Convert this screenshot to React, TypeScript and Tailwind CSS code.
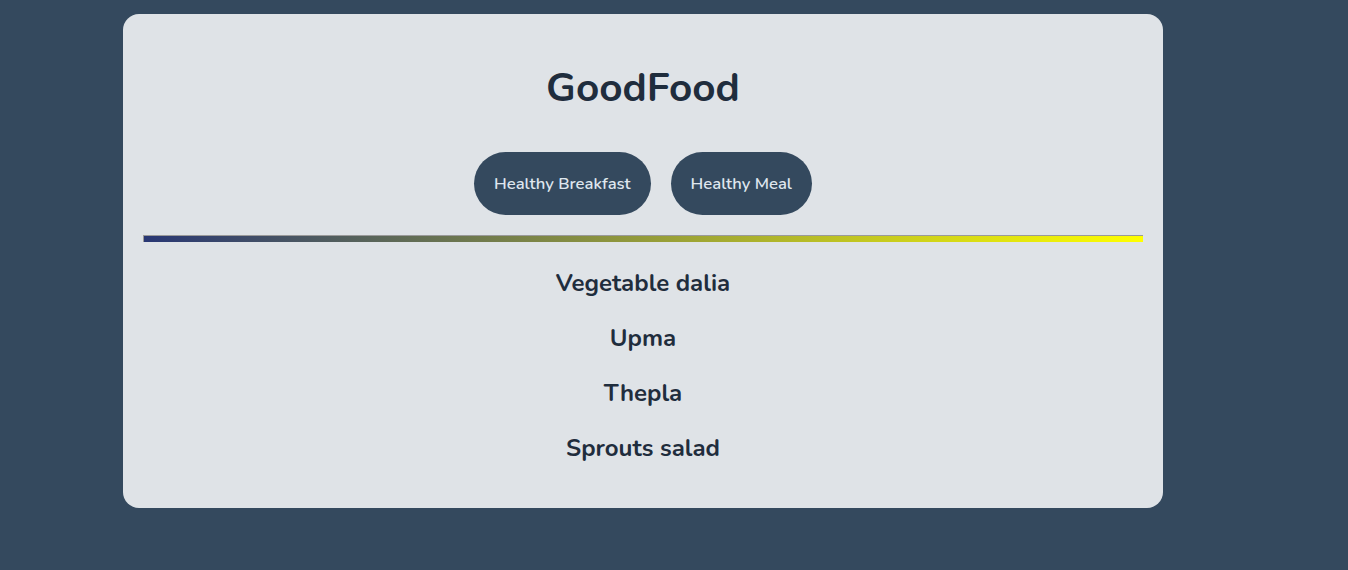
import React from "react";

const font = { fontFamily: '"Nunito", "Lato", "Open Sans", sans-serif' };

export default function App() {
  const items = ["Vegetable dalia", "Upma", "Thepla", "Sprouts salad"];
  return (
    <div className="min-h-[570px] w-full bg-[#34495e] pt-[14px] pb-[62px]" style={font}>
      <div className="ml-[123px] w-[1040px] h-[494px] rounded-[16px] bg-[#dfe3e7] px-[20px] pt-[50px] text-[#1f2d3d]">
        <h1 className="text-center text-[40.5px] font-bold leading-[48px] text-[#1f2d3d]">GoodFood</h1>
        <div className="mt-[40px] flex justify-center gap-[20px]">
          <button className="h-[63px] rounded-full bg-[#34495e] px-[20px] pt-[2px] text-[16.6px] font-semibold text-[#dfe6ee]">Healthy Breakfast</button>
          <button className="h-[63px] rounded-full bg-[#34495e] px-[20px] pt-[2px] text-[16.6px] font-semibold text-[#dfe6ee]">Healthy Meal</button>
        </div>
        <div className="mt-[20px] h-[7px] border-t border-l border-[#9a9a9a] bg-[linear-gradient(to_right,#283774,#ffff00)]" />
        <div className="mt-[25px] flex flex-col items-center gap-[23px]">
          {items.map((t) => (
            <div key={t} className="text-[24px] font-bold leading-[32px]">{t}</div>
          ))}
        </div>
      </div>
    </div>
  );
}
